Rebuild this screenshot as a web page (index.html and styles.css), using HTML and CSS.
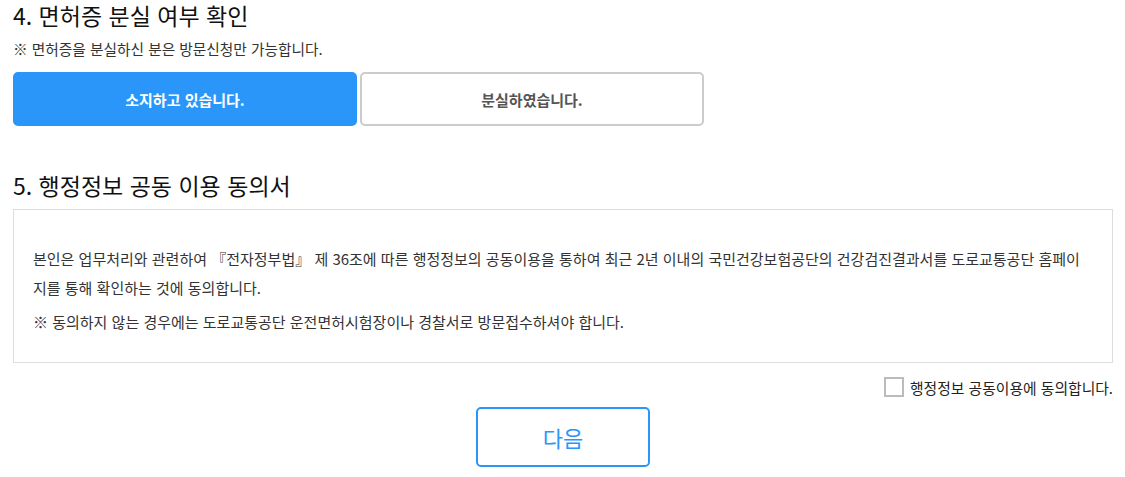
FILE: index.html
```html
<!DOCTYPE html>
<html lang="ko">
<head>
  <meta charset="UTF-8">
  <meta name="viewport" content="width=device-width, initial-scale=1.0">
  <title>면허증 분실 여부 확인</title>
  <link rel="stylesheet" href="styles.css">
</head>
<body>
  <section class="step">
    <h3 class="step-title">4. 면허증 분실 여부 확인</h3>
    <p class="step-note">※ 면허증을 분실하신 분은 방문신청만 가능합니다.</p>
    <div class="choice-row">
      <button type="button" class="choice active">소지하고 있습니다.</button>
      <button type="button" class="choice">분실하였습니다.</button>
    </div>
  </section>

  <section class="step step-agree">
    <h3 class="step-title">5. 행정정보 공동 이용 동의서</h3>
    <div class="agree-box">
      <p>본인은 업무처리와 관련하여 『전자정부법』 제 36조에 따른 행정정보의 공동이용을 통하여 최근 2년 이내의 국민건강보험공단의 건강검진결과서를 도로교통공단 홈페이지를 통해 확인하는 것에 동의합니다.</p>
      <p class="agree-warn">※ 동의하지 않는 경우에는 도로교통공단 운전면허시험장이나 경찰서로 방문접수하셔야 합니다.</p>
    </div>
    <label class="agree-check">
      <input type="checkbox" id="agree">
      <span class="check-box"></span>
      <span>행정정보 공동이용에 동의합니다.</span>
    </label>
    <div class="btn-area">
      <button type="button" class="btn-next">다음</button>
    </div>
  </section>
</body>
</html>
```

FILE: styles.css
```css
body {
  margin: 0;
  padding: 0 12px 0 13px;
  font-family: "Noto Sans CJK KR", "Noto Sans", sans-serif;
  color: #222;
  background-color: #fff;
}
.step-title {
  margin: 0;
  font-size: 23px;
  font-weight: 400;
  line-height: 30px;
  color: #111;
}
.step-agree .step-title {
  line-height: 32px;
}
.step-note {
  margin: 8px 0 0;
  font-size: 14.7px;
  line-height: 22px;
  color: #333;
}
.choice-row {
  display: flex;
  gap: 3px;
  margin-top: 12px;
}
.choice {
  width: 344px;
  height: 54px;
  border: 2px solid #ccc;
  border-radius: 5px;
  background-color: #fff;
  font-family: inherit;
  font-size: 15px;
  font-weight: 700;
  color: #555;
  cursor: pointer;
}
.choice.active {
  background-color: #2a96f9;
  border-color: #2a96f9;
  color: #fff;
}
.step-agree {
  margin-top: 43px;
}
.agree-box {
  margin-top: 8px;
  border: 1px solid #ddd;
  padding: 34px 30px 26px 19px;
  font-size: 15px;
  color: #333;
}
.agree-box p {
  margin: 0;
  line-height: 29px;
}
.agree-box .agree-warn {
  margin-top: 5px;
}
.agree-check {
  display: flex;
  justify-content: flex-end;
  align-items: center;
  gap: 6px;
  height: 20px;
  margin-top: 14px;
  font-size: 14.8px;
  color: #222;
  cursor: pointer;
}
.agree-check input {
  display: none;
}
.check-box {
  width: 16px;
  height: 16px;
  border: 2px solid #bbb;
  background-color: #fff;
}
.agree-check input:checked + .check-box {
  background-color: #2a96f9;
  border-color: #2a96f9;
}
.btn-area {
  display: flex;
  justify-content: center;
  margin-top: 10px;
}
.btn-next {
  width: 174px;
  height: 60px;
  border: 2px solid #2a96f9;
  border-radius: 5px;
  background-color: #fff;
  font-family: inherit;
  font-size: 22px;
  color: #2a96f9;
  cursor: pointer;
}
```
